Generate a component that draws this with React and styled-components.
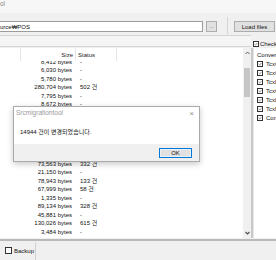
import React from "react";
import styled, { createGlobalStyle } from "styled-components";

const Global = createGlobalStyle`
  html, body { margin: 0; padding: 0; background: #f0f0f0; }
  body { font-family: "Liberation Sans", Arial, "Noto Sans CJK KR", sans-serif; }
`;

const Window = styled.div`
  position: relative;
  width: 276px;
  height: 260px;
  overflow: hidden;
  background: #f0f0f0;
  display: flex;
  flex-direction: column;
  color: #111;
  font-size: 6px;
  line-height: 1;
`;

const TitleBar = styled.div`
  height: 13px;
  flex: none;
  background: #f7f7f7;
  box-sizing: border-box;
  padding-top: 1px;
  font-size: 6.5px;
  color: #8a8a8a;
  white-space: nowrap;
`;

const Toolbar = styled.div`
  flex: none;
  display: flex;
  align-items: flex-start;
  padding-top: 8px;
  height: 21px;
  box-sizing: border-box;
`;

const PathBox = styled.div`
  width: 203px;
  height: 11px;
  box-sizing: border-box;
  background: #fff;
  border: 1px solid #9c9c9c;
  border-left: none;
  display: flex;
  align-items: center;
  white-space: nowrap;
  overflow: hidden;
  font-size: 6px;
  color: #111;
`;

const SmallButton = styled.div`
  margin-left: 3px;
  width: ${(p) => p.$w}px;
  height: 11px;
  box-sizing: border-box;
  background: #e1e1e1;
  border: 1px solid #adadad;
  display: flex;
  align-items: center;
  justify-content: center;
  font-size: ${(p) => p.$fs || 6}px;
  color: ${(p) => p.$color || "#111"};
  white-space: nowrap;
`;

const VSep = styled.div`
  width: 1px;
  align-self: stretch;
  margin: -4px 3px 0 10px;
  background: #d4d4d4;
`;

const Band = styled.div`
  flex: none;
  height: 14px;
  display: flex;
`;

const BandLeft = styled.div`
  width: 251px;
  margin-top: 1px;
  height: 12px;
  box-sizing: border-box;
  border-top: 1px solid #d4d4d4;
  border-bottom: 1px solid #d4d4d4;
  background: #f5f5f5;
`;

const BandRight = styled.div`
  flex: 1;
  display: flex;
  align-items: flex-end;
  padding-left: 2px;
  padding-bottom: 1px;
  gap: 1px;
  white-space: nowrap;
  overflow: hidden;
  font-size: 6px;
`;

const Main = styled.div`
  flex: none;
  height: 190px;
  display: flex;
`;

const ListArea = styled.div`
  width: 243px;
  background: #fff;
  display: flex;
  flex-direction: column;
  overflow: hidden;
`;

const HeaderRow = styled.div`
  flex: none;
  height: 13px;
  display: grid;
  grid-template-columns: 21px 55px 41px;
  background: #fff;
  position: relative;
  z-index: 1;
`;

const HeadCell = styled.div`
  display: flex;
  align-items: center;
  justify-content: ${(p) => (p.$right ? "flex-end" : "flex-start")};
  padding: 0 2px;
  border-right: 1px solid #e5e5e5;
  color: #222;
  font-size: 6px;
`;

const Body = styled.div`
  flex: 1;
  overflow: hidden;
`;

const Rows = styled.div`
  margin-top: -3.75px;
`;

const Row = styled.div`
  height: 8.5px;
  display: grid;
  grid-template-columns: 21px 55px 41px;
  align-items: center;
  font-size: 6px;
  color: #111;
  white-space: nowrap;
`;

const SizeCell = styled.div`
  grid-column: 2;
  text-align: right;
  padding-right: 4px;
`;

const StatusCell = styled.div`
  padding-left: 4px;
`;

const ScrollBar = styled.div`
  width: 8px;
  background: #f0f0f0;
  display: flex;
  flex-direction: column;
  align-items: center;
`;

const ScrollArrow = styled.div`
  height: 10px;
  flex: none;
  display: flex;
  align-items: center;
  justify-content: center;
`;

const Track = styled.div`
  flex: 1;
  width: 100%;
  display: flex;
  justify-content: center;
`;

const Thumb = styled.div`
  margin-top: 10px;
  width: 6px;
  height: 29px;
  background: #c6c6c6;
`;

const Divider = styled.div`
  width: 3px;
  background: #c9c9c9;
  border-right: 1px solid #e6e6e6;
  box-sizing: border-box;
`;

const RightPanel = styled.div`
  flex: 1;
  background: #fff;
  padding: 2.5px 0 0 3px;
  overflow: hidden;
  white-space: nowrap;
`;

const RightItem = styled.div`
  height: 9px;
  display: flex;
  align-items: center;
  gap: 3px;
  font-size: 6px;
  color: #111;
`;

const BottomLine = styled.div`
  flex: none;
  height: 2px;
  margin-top: 1px;
  background: #b9b9b9;
`;

const Footer = styled.div`
  flex: 1;
  display: flex;
  align-items: stretch;
`;

const FooterCheck = styled.div`
  display: flex;
  align-items: center;
  gap: 2px;
  padding-left: 5px;
  width: 35px;
  box-sizing: border-box;
  font-size: 6px;
  color: #111;
`;

const FooterSep = styled.div`
  width: 1px;
  margin-top: 1px;
  background: #d0d0d0;
`;

const Dialog = styled.div`
  position: absolute;
  left: 13px;
  top: 106px;
  width: 187px;
  height: 56px;
  box-sizing: border-box;
  background: #fff;
  border: 1px solid #aaaaaa;
  box-shadow: 0 2px 6px rgba(0, 0, 0, 0.22);
  display: flex;
  flex-direction: column;
  z-index: 5;
`;

const DialogTitle = styled.div`
  height: 13px;
  display: flex;
  align-items: center;
  justify-content: space-between;
  padding: 0 5px 0 2px;
  font-size: 6.5px;
  color: #9a9a9a;
`;

const Close = styled.span`
  font-size: 8px;
  color: #8a8a8a;
`;

const DialogMessage = styled.div`
  height: 24px;
  display: flex;
  align-items: center;
  padding-left: 6px;
  font-size: 6px;
  color: #111;
`;

const DialogFooter = styled.div`
  flex: 1;
  background: #f0f0f0;
  display: flex;
  justify-content: flex-end;
  align-items: center;
  padding-right: 7px;
`;

const OkButton = styled.div`
  width: 33px;
  height: 10px;
  box-sizing: border-box;
  border: 1px solid #0078d7;
  background: #e1e1e1;
  box-shadow: inset 0 0 0 1px #e8f0f8;
  display: flex;
  align-items: center;
  justify-content: center;
  font-size: 6px;
  color: #111;
`;

const BoxWrap = styled.span`
  display: inline-flex;
  flex: none;
  width: ${(p) => p.$s}px;
  height: ${(p) => p.$s}px;
  box-sizing: border-box;
  border: 1px solid #333;
  background: #fff;
  align-items: center;
  justify-content: center;
`;

function Check({ checked, size = 7 }) {
  return (
    <BoxWrap $s={size}>
      {checked && (
        <svg width={size - 2} height={size - 2} viewBox="0 0 10 10">
          <path d="M1.5 5.2 L4 7.6 L8.7 2.3" fill="none" stroke="#222" strokeWidth="1.3" />
        </svg>
      )}
    </BoxWrap>
  );
}

const rows = [
  ["8,412 bytes", "-"],
  ["6,030 bytes", "-"],
  ["5,780 bytes", "-"],
  ["280,704 bytes", "502 건"],
  ["7,795 bytes", "-"],
  ["8,672 bytes", "-"],
  ["12,480 bytes", "-"],
  ["64,210 bytes", "211 건"],
  ["3,128 bytes", "-"],
  ["41,905 bytes", "-"],
  ["9,344 bytes", "-"],
  ["15,772 bytes", "-"],
  ["73,563 bytes", "332 건"],
  ["21,150 bytes", "-"],
  ["78,943 bytes", "133 건"],
  ["67,999 bytes", "58 건"],
  ["1,335 bytes", "-"],
  ["89,134 bytes", "328 건"],
  ["45,881 bytes", "-"],
  ["130,026 bytes", "615 건"],
  ["3,484 bytes", "-"],
];

const rightItems = [
  "TcxCheckBox",
  "TcxComboBox",
  "TcxDateEdit",
  "TcxGrid",
  "TcxLabel",
  "TcxMemo",
];

export default function App() {
  return (
    <>
      <Global />
      <Window>
        <TitleBar>ol</TitleBar>
        <Toolbar>
          <PathBox>urce₩POS</PathBox>
          <SmallButton $w={11} $fs={5} $color="#666">...</SmallButton>
          <VSep />
          <SmallButton $w={41}>Load files</SmallButton>
        </Toolbar>
        <Band>
          <BandLeft />
          <BandRight>
            <Check checked size={6} />
            <span>Check</span>
          </BandRight>
        </Band>
        <Main>
          <ListArea>
            <HeaderRow>
              <HeadCell />
              <HeadCell $right>Size</HeadCell>
              <HeadCell>Status</HeadCell>
            </HeaderRow>
            <Body>
              <Rows>
                {rows.map(([size, status], i) => (
                  <Row key={i}>
                    <SizeCell>{size}</SizeCell>
                    <StatusCell>{status}</StatusCell>
                  </Row>
                ))}
              </Rows>
            </Body>
          </ListArea>
          <ScrollBar>
            <ScrollArrow>
              <svg width="5" height="4" viewBox="0 0 5 4">
                <path d="M0.5 3 L2.5 1 L4.5 3" fill="none" stroke="#606060" strokeWidth="1" />
              </svg>
            </ScrollArrow>
            <Track>
              <Thumb />
            </Track>
            <ScrollArrow>
              <svg width="5" height="4" viewBox="0 0 5 4">
                <path d="M0.5 1 L2.5 3 L4.5 1" fill="none" stroke="#505050" strokeWidth="1.2" />
              </svg>
            </ScrollArrow>
          </ScrollBar>
          <Divider />
          <RightPanel>
            <RightItem>Converter</RightItem>
            {rightItems.map((t) => (
              <RightItem key={t}>
                <Check checked size={6} />
                <span>{t}</span>
              </RightItem>
            ))}
            <RightItem>
              <Check checked size={6} />
              <span>Component</span>
            </RightItem>
          </RightPanel>
        </Main>
        <BottomLine />
        <Footer>
          <FooterCheck>
            <Check size={7} />
            <span>Backup</span>
          </FooterCheck>
          <FooterSep />
        </Footer>
        <Dialog>
          <DialogTitle>
            <span>Srcmigrationtool</span>
            <Close>×</Close>
          </DialogTitle>
          <DialogMessage>14944 건이 변경되었습니다.</DialogMessage>
          <DialogFooter>
            <OkButton>OK</OkButton>
          </DialogFooter>
        </Dialog>
      </Window>
    </>
  );
}
